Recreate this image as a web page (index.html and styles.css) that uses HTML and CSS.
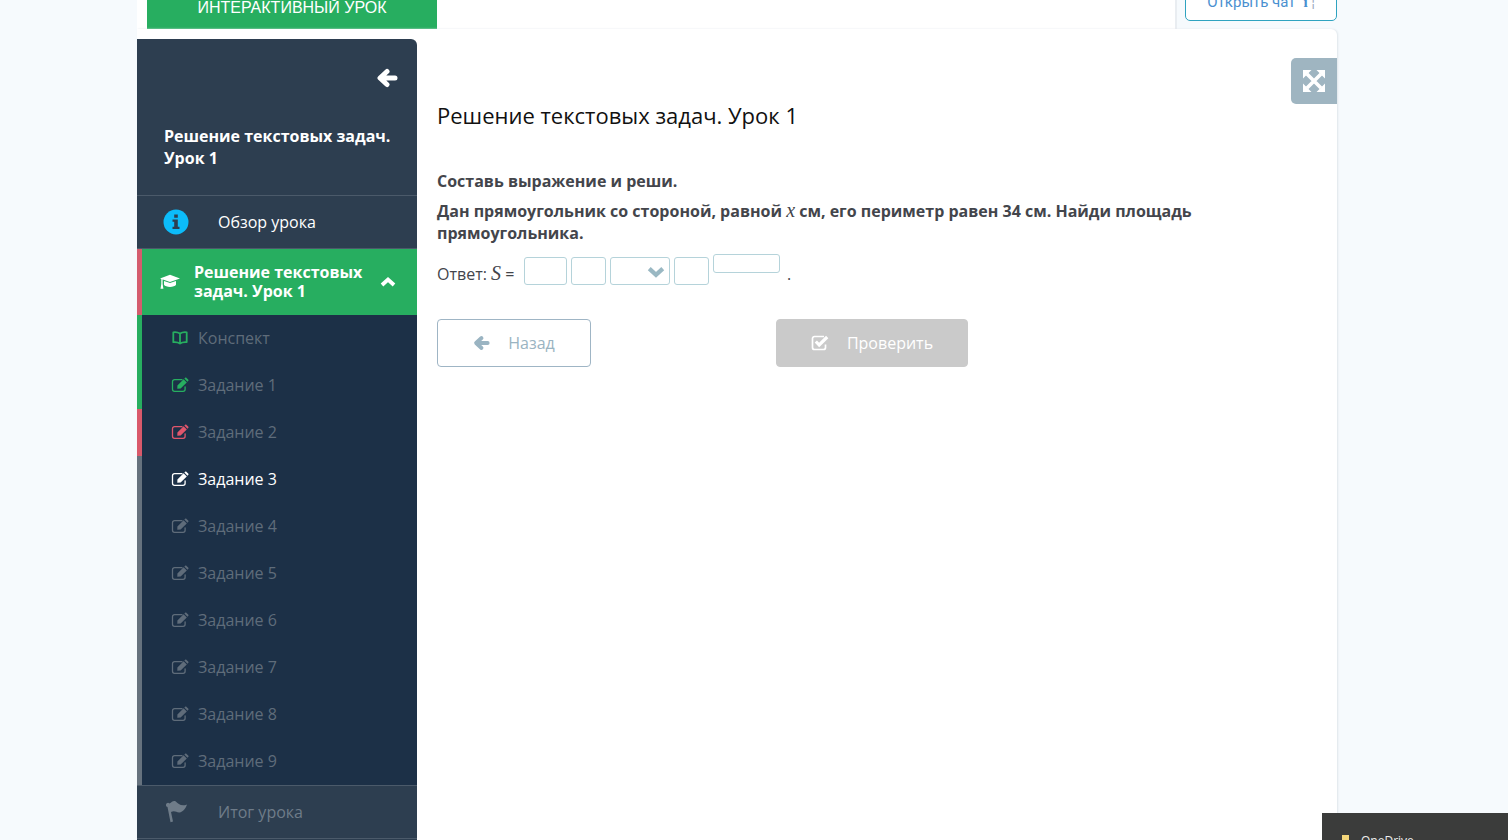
FILE: index.html
```html
<!DOCTYPE html>
<html lang="ru">
<head>
<meta charset="utf-8">
<title>Решение текстовых задач. Урок 1</title>
<link rel="stylesheet" href="styles.css">
</head>
<body>
<svg class="defs" aria-hidden="true">
  <symbol id="arrow" viewBox="0 0 22 20"><path d="M11 3.500 4 10l7 6.500M5 10h14" fill="none" stroke="currentColor" stroke-width="5" stroke-linecap="round" stroke-linejoin="round"/></symbol>
  <symbol id="edit" viewBox="0 0 18 16"><path d="M11 2.700H3.500A2 2 0 0 0 1.500 4.700v7.600a2 2 0 0 0 2 2h8.600a2 2 0 0 0 2-2V9.800" fill="none" stroke="currentColor" stroke-width="1.300" stroke-linecap="round"/><path d="m6.300 11.800.1-3.400 6.200-6.200 3.200 3.200-6.200 6.200ZM13.300 1.600l.7-.7c.5-.5 1-.5 1.500 0l1.700 1.700c.5.5.5 1 0 1.500l-.7.7Z" fill="currentColor"/></symbol>
  <symbol id="book" viewBox="0 0 18 16"><path d="M9 3.600C7 2.300 4.500 2 2.300 2.300v9.900c2.200-.2 4.700 0 6.700 1.400 2-1.400 4.500-1.600 6.700-1.400V2.300C13.500 2 11 2.300 9 3.600Zm0 0v10" fill="none" stroke="currentColor" stroke-width="1.800" stroke-linejoin="round"/></symbol>
  <symbol id="chevron" viewBox="0 0 16 12"><path d="m2 3 6 5.500L14 3" fill="none" stroke="currentColor" stroke-width="3.800"/></symbol>
</svg>
<div class="page">
  <header class="top">
    <button class="lesson-btn" type="button">ИНТЕРАКТИВНЫЙ УРОК</button>
    <div class="chat"><button class="chat-btn" type="button">Открыть чат<span class="chat-i">i</span><span class="chat-mark">'¦</span></button></div>
  </header>
  <div class="body">
    <nav class="side">
      <div class="side-head">
        <button class="collapse" type="button" aria-label="Свернуть меню"><svg width="22" height="20"><use href="#arrow"/></svg></button>
        <h2>Решение текстовых задач. Урок 1</h2>
      </div>
      <a class="row" href="#overview">
        <svg width="26" height="26" viewBox="0 0 26 26"><circle cx="13" cy="13" r="12.500" fill="#0cbcfa"/><path d="M11.200 5.500h3.600v3.300h-3.600ZM9.500 10.500h5.300v7.200h1.700v2.300h-7v-2.300h1.700v-4.900H9.500Z" fill="#2d3e50"/></svg>
        <span>Обзор урока</span>
      </a>
      <a class="section" href="#lesson">
        <svg width="20" height="16" viewBox="0 0 20 16"><path d="M10 .800 20 4.500 10 8 0 4.500Z M4 7l6 2.100L16 7v3.800c-1.500 2.800-10.500 2.800-12 0Z M1.300 5h1.300v5l.8 4.800H.500L1.300 10Z" fill="currentColor"/></svg>
        <span>Решение текстовых задач. Урок 1</span>
        <svg class="up" width="16" height="12"><use href="#chevron"/></svg>
      </a>
      <ul class="tasks">
        <li class="good"><a href="#t0"><svg width="18" height="16"><use href="#book"/></svg>Конспект</a></li>
        <li class="good"><a href="#t1"><svg width="18" height="16"><use href="#edit"/></svg>Задание 1</a></li>
        <li class="bad"><a href="#t2"><svg width="18" height="16"><use href="#edit"/></svg>Задание 2</a></li>
        <li class="now"><a href="#t3" aria-current="page"><svg width="18" height="16"><use href="#edit"/></svg>Задание 3</a></li>
        <li><a href="#t4"><svg width="18" height="16"><use href="#edit"/></svg>Задание 4</a></li>
        <li><a href="#t5"><svg width="18" height="16"><use href="#edit"/></svg>Задание 5</a></li>
        <li><a href="#t6"><svg width="18" height="16"><use href="#edit"/></svg>Задание 6</a></li>
        <li><a href="#t7"><svg width="18" height="16"><use href="#edit"/></svg>Задание 7</a></li>
        <li><a href="#t8"><svg width="18" height="16"><use href="#edit"/></svg>Задание 8</a></li>
        <li><a href="#t9"><svg width="18" height="16"><use href="#edit"/></svg>Задание 9</a></li>
      </ul>
      <a class="row muted" href="#result">
        <svg width="26" height="26" viewBox="0 0 26 26"><path d="M3 5.500a2 2 0 0 1 3.400-1C9 3 10 1.200 12.500 2.200c3 2.400 5.500 5.700 11.500 3.300-1 3.500-4.200 7.500-7.500 8-3 .3-4.500-2.300-8.500-.500l2 9.500-2.500.800L4.500 8A2 2 0 0 1 3 5.500Z" fill="currentColor"/></svg>
        <span>Итог урока</span>
      </a>
    </nav>
    <main class="main">
      <button class="expand" type="button" aria-label="На весь экран"><svg width="22" height="22" viewBox="0 0 22 22"><path d="m4 4 14 14M18 4 4 18" stroke="currentColor" stroke-width="3.600"/><path d="M0 0h8.500L0 8.500ZM22 0v8.500L13.500 0ZM0 22v-8.500L8.500 22ZM22 22h-8.500l8.500-8.500Z" fill="currentColor"/></svg></button>
      <h1>Решение текстовых задач. Урок 1</h1>
      <p class="lead">Составь выражение и реши.</p>
      <p class="lead">Дан прямоугольник со стороной, равной <i class="math">x</i> см, его периметр равен 34 см. Найди площадь прямоугольника.</p>
      <div class="answer">
        <span class="label">Ответ: <i class="math">S</i> =</span>
        <input class="w-l" type="text" aria-label="Множитель">
        <input class="w-s" type="text" aria-label="Переменная">
        <span class="pick"><select aria-label="Знак"><option></option><option>+</option><option>−</option></select><svg width="18" height="14"><use href="#chevron"/></svg></span>
        <input class="w-s" type="text" aria-label="Второе слагаемое">
        <input class="unit" type="text" aria-label="Степень">
        <span class="dot">.</span>
      </div>
      <div class="actions">
        <button class="back" type="button"><svg width="17" height="16"><use href="#arrow"/></svg>Назад</button>
        <button class="check" type="button"><svg width="18" height="16" viewBox="0 0 18 16"><path d="M13 1.500H3.500a2 2 0 0 0-2 2v9a2 2 0 0 0 2 2h9a2 2 0 0 0 2-2V9.500" fill="none" stroke="currentColor" stroke-width="1.700"/><path d="m4.800 6.500 3.400 3.500 8-8" fill="none" stroke="currentColor" stroke-width="3.200"/></svg>Проверить</button>
      </div>
    </main>
  </div>
</div>
<aside class="toast"><svg width="10" height="14" viewBox="0 0 10 14"><path d="M1 0h7v9l2 1v4H1Z" fill="#f3d67a"/></svg>OneDrive</aside>
</body>
</html>
```
FILE: styles.css
```css
* { box-sizing: border-box; }
body {
  margin: 0;
  height: 100vh;
  overflow: hidden;
  padding-right: 34px;
  background: #f6fafd;
  color: #43454b;
  font: 16px/22px "Open Sans", "Noto Sans", sans-serif;
}
.defs { display: none; }
svg { flex: none; }
button { font: inherit; cursor: pointer; }
a { color: inherit; text-decoration: none; }
h1, h2, p, ul { margin: 0; padding: 0; }

.page {
  display: flex;
  flex-direction: column;
  max-width: 1200px;
  height: 100%;
  margin: 0 auto;
}
.top {
  display: flex;
  align-items: flex-end;
  justify-content: space-between;
  height: 29px;
  padding-left: 10px;
  background: #fff;
}
.lesson-btn {
  width: 290px;
  height: 42px;
  border: 0;
  background: #27ae60;
  color: #fff;
  font: 16px/20px "Liberation Sans", Arial, sans-serif;
}
.chat {
  display: flex;
  align-items: flex-end;
  width: 162px;
  height: 100%;
  padding: 0 0 8px 8px;
  border-left: 2px solid #e9edf1;
  background: #f6fafd;
}
.chat-btn {
  flex: 1;
  height: 38px;
  border: 1px solid #2fa3c0;
  border-radius: 5px;
  background: #fff;
  color: #4a90d0;
  font: 15px/20px Roboto, sans-serif;
}
.chat-i { margin-left: 8px; font: bold 15px "Liberation Serif", serif; }
.chat-mark { margin-left: 2px; color: #9aa9bd; font-size: 12px; }

.body {
  display: flex;
  flex: 1;
  min-height: 0;
  background: #fff;
  border-radius: 0 6px 0 0;
  box-shadow: 1px 0 2px #dfe5ea;
}
.side {
  flex: none;
  width: 280px;
  margin-top: 10px;
  overflow: hidden;
  border-radius: 0 6px 0 0;
  background: #2d3e50;
  color: #fff;
}
.side-head {
  display: flex;
  flex-direction: column;
  height: 156px;
  padding: 29px 19px 0 27px;
}
.collapse {
  display: flex;
  align-self: flex-end;
  padding: 0;
  border: 0;
  background: none;
  color: #fff;
}
h2 { margin-top: 37px; font-size: 16px; line-height: 22px; }
.row {
  display: flex;
  align-items: center;
  gap: 29px;
  height: 54px;
  padding-left: 26px;
  border: solid #4b5a6a;
  border-width: 1px 0;
}
.muted { color: #6f7c89; }
.section {
  display: flex;
  align-items: center;
  gap: 14px;
  height: 66px;
  padding: 0 21px 0 18px;
  border-left: 5px solid #d45c6e;
  background: #27ae60;
  font-weight: 700;
  line-height: 19px;
}
.section span { flex: 1; }
.up { transform: rotate(180deg); }
.tasks { list-style: none; background: #1c3047; }
.tasks li { border-left: 5px solid #66727e; }
.tasks a {
  display: flex;
  align-items: center;
  gap: 9px;
  height: 47px;
  padding: 0 0 2px 29px;
  color: #5f6c7a;
}
.tasks .good { border-color: #27ae60; }
.tasks .good svg { color: #27ae60; }
.tasks .bad { border-color: #d9596b; }
.tasks .bad svg { color: #e0566c; }
.tasks .now a { color: #fff; }

.main {
  display: flex;
  flex: 1;
  flex-direction: column;
  padding: 29px 0 0 20px;
}
.expand {
  display: grid;
  place-items: center;
  align-self: flex-end;
  width: 46px;
  height: 46px;
  padding: 0;
  border: 0;
  border-radius: 5px 0 0 5px;
  background: #9fb5c1;
  color: #fff;
}
h1 {
  margin-bottom: 44px;
  color: #111;
  font-size: 22px;
  font-weight: 400;
  line-height: 22px;
}
.lead { margin: 0 20px 8px 0; font-weight: 700; }
.math { font: italic 20px/16px "Liberation Serif", serif; }
.answer { display: flex; gap: 4px; padding-top: 2px; height: 42px; }
.label { width: 83px; padding-top: 9px; }
input, select {
  height: 28px;
  padding: 0 6px;
  border: 1px solid #b5d3da;
  border-radius: 3px;
  background: #fff;
  font: inherit;
}
.answer > input, .pick { margin-top: 3px; }
.w-l { width: 43px; }
.w-s { width: 35px; }
.pick { position: relative; width: 60px; height: 28px; }
.pick select { display: block; width: 100%; appearance: none; }
.pick svg {
  position: absolute;
  top: 8px;
  right: 5px;
  color: #9ab8c3;
  pointer-events: none;
}
.answer > .unit { width: 67px; height: 19px; margin-top: 0; }
.dot { padding: 9px 0 0 3px; }
.actions { display: flex; gap: 185px; margin-top: 25px; }
.back, .check {
  display: flex;
  align-items: center;
  justify-content: center;
  gap: 18px;
  width: 154px;
  height: 48px;
  border: 1px solid #9fb5c5;
  border-radius: 4px;
  background: #fff;
  color: #9ab4c2;
}
.check { width: 192px; border-color: #cacaca; background: #cacaca; color: #fff; }

.toast {
  position: fixed;
  right: 0;
  bottom: 0;
  display: flex;
  gap: 10px;
  width: 186px;
  height: 27px;
  padding: 22px 0 0 19px;
  overflow: hidden;
  background: #3b3c3b;
  color: #eee;
  font-size: 12px;
  line-height: 12px;
}
```
